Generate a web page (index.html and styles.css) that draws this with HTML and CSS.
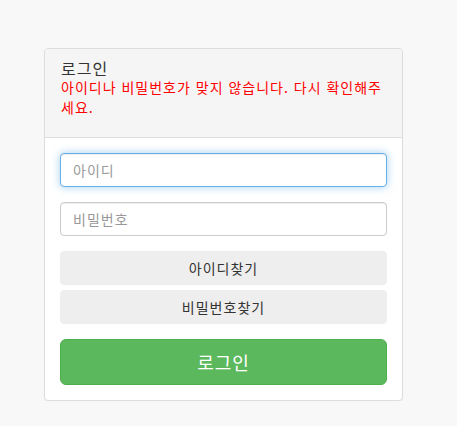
FILE: index.html
```html
<!DOCTYPE html>
<html lang="ko">
<head>
    <meta charset="UTF-8">
    <meta name="viewport" content="width=device-width, initial-scale=1.0">
    <title>로그인</title>
    <link rel="stylesheet" href="styles.css">
</head>
<body>
    <div class="panel">
        <div class="panel-heading">
            <h3 class="panel-title">로그인</h3>
            <p class="error">아이디나 비밀번호가 맞지 않습니다. 다시 확인해주세요.</p>
        </div>
        <form class="panel-body">
            <div class="form-group">
                <input type="text" class="form-control focus" placeholder="아이디" autofocus>
            </div>
            <div class="form-group">
                <input type="password" class="form-control" placeholder="비밀번호">
            </div>
            <button type="button" class="btn btn-default">아이디찾기</button>
            <button type="button" class="btn btn-default">비밀번호찾기</button>
            <button type="submit" class="btn btn-success">로그인</button>
        </form>
    </div>
</body>
</html>
```

FILE: styles.css
```css
* {
    box-sizing: border-box;
}
body {
    margin: 0;
    background-color: #f8f8f8;
    font-family: "Noto Sans CJK KR", "Liberation Sans", sans-serif;
    font-size: 14px;
    line-height: 20px;
    letter-spacing: 1px;
    color: #333;
}
.panel {
    width: 359px;
    margin: 48px 0 0 44px;
    background-color: #fff;
    border: 1px solid #ddd;
    border-radius: 4px;
    box-shadow: 0 1px 1px rgba(0, 0, 0, 0.05);
}
.panel-heading {
    padding: 10px 16px 20px;
    background-color: #f5f5f5;
    border-bottom: 1px solid #ddd;
    border-radius: 3px 3px 0 0;
}
.panel-title {
    margin: 0;
    font-size: 16px;
    font-weight: normal;
    line-height: 18px;
}
.error {
    margin: 0;
    color: #f00;
}
.panel-body {
    padding: 15px;
    display: flex;
    flex-direction: column;
}
.form-group {
    margin-bottom: 15px;
}
.form-control {
    display: block;
    width: 100%;
    height: 34px;
    padding: 6px 12px;
    font-family: inherit;
    font-size: 14px;
    letter-spacing: 1px;
    color: #555;
    background-color: #fff;
    border: 1px solid #ccc;
    border-radius: 4px;
    box-shadow: inset 0 1px 1px rgba(0, 0, 0, 0.075);
    outline: none;
}
.form-control::placeholder {
    color: #999;
}
.form-control.focus,
.form-control:focus {
    border-color: #66afe9;
    box-shadow: inset 0 1px 1px rgba(0, 0, 0, 0.075), 0 0 8px rgba(102, 175, 233, 0.6);
}
.btn {
    display: block;
    width: 100%;
    height: 34px;
    padding: 6px 12px;
    font-family: inherit;
    font-size: 14px;
    letter-spacing: 1px;
    color: #333;
    border: 1px solid transparent;
    border-radius: 4px;
    cursor: pointer;
}
.btn-default {
    background-color: #eee;
    border-color: #eee;
}
.btn-default + .btn-default {
    margin-top: 5px;
}
.btn-success {
    height: 46px;
    margin-top: 15px;
    font-size: 18px;
    color: #fff;
    background-color: #5cb85c;
    border-color: #4cae4c;
    border-radius: 6px;
}
```
